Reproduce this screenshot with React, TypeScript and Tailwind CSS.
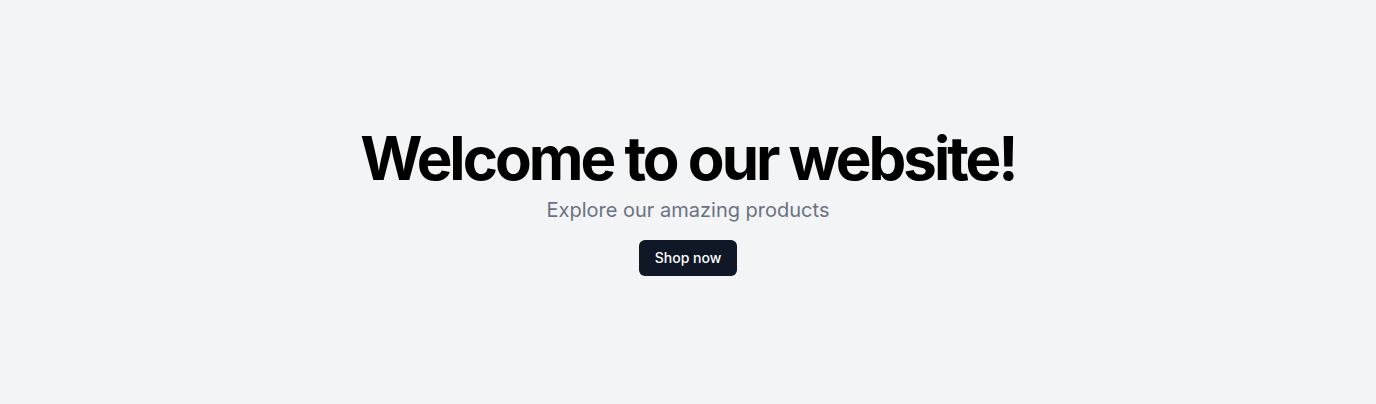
import React from "react";

const App = () => {
  return (
    <div className="flex h-[404px] w-full flex-col items-center justify-center bg-gray-100 font-['Inter',sans-serif]">
      <h1 className="mb-2 text-6xl font-bold tracking-tighter text-black">
        Welcome to our website!
      </h1>
      <p className="mb-4 text-xl text-gray-500">Explore our amazing products</p>
      <button className="h-9 rounded-md bg-gray-900 px-4 text-sm font-medium text-white">
        Shop now
      </button>
    </div>
  );
};

export default App;
